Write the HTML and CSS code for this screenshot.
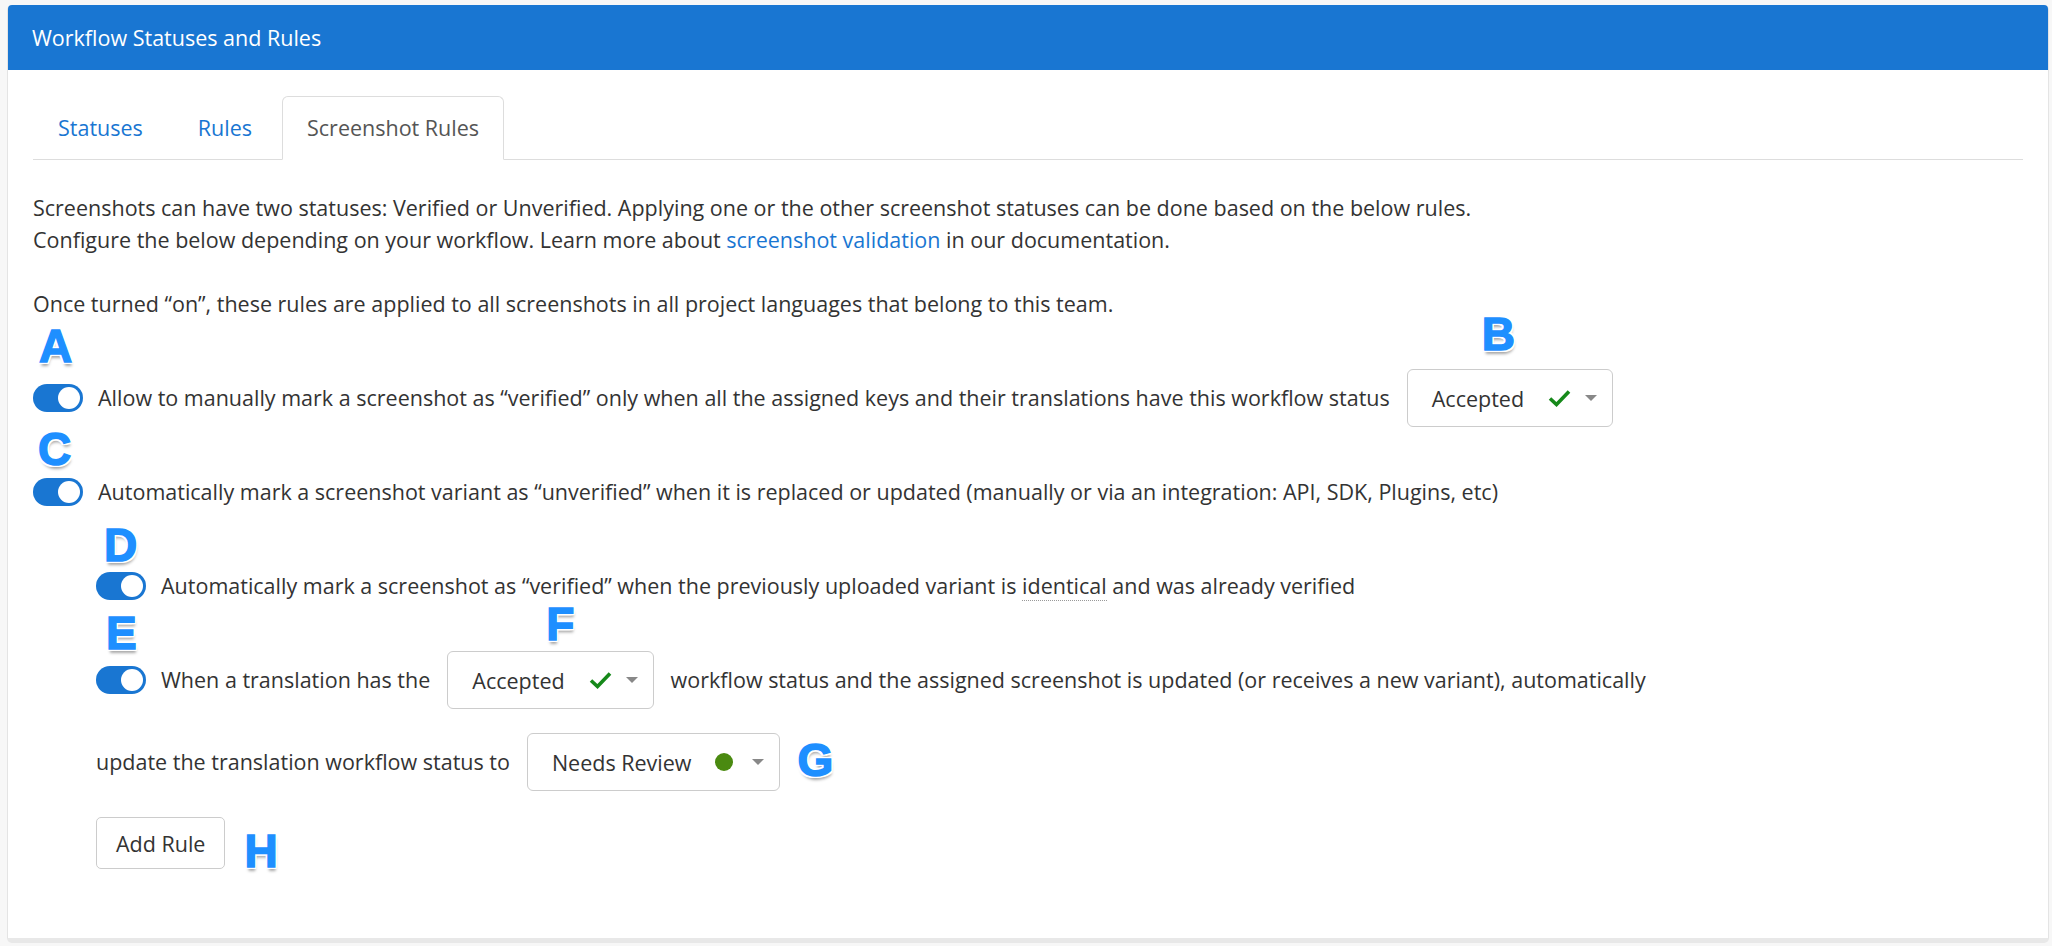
FILE: index.html
```html
<!DOCTYPE html>
<html>
<head>
<meta charset="utf-8">
<title>Workflow Statuses and Rules</title>
<link rel="stylesheet" href="styles.css">
</head>
<body>
<div class="panel">
	<div class="panel-heading">Workflow Statuses and Rules</div>
	<div class="panel-body">
		<ul class="nav-tabs">
			<li><a href="#">Statuses</a></li>
			<li><a href="#">Rules</a></li>
			<li class="active"><a href="#">Screenshot Rules</a></li>
		</ul>

		<p class="intro">Screenshots can have two statuses: Verified or Unverified. Applying one or the other screenshot statuses can be done based on the below rules.<br>
		Configure the below depending on your workflow. Learn more about <a href="#">screenshot validation</a> in our documentation.</p>
		<p class="intro">Once turned “on”, these rules are applied to all screenshots in all project languages that belong to this team.</p>

		<div class="rule first">
			<span class="mark mark-a">A</span>
			<span class="toggle"></span>
			<span class="rule-text">Allow to manually mark a screenshot as “verified” only when all the assigned keys and their translations have this workflow status</span>
			<div class="status-select">
				<span class="mark mark-b">B</span>
				<span class="status-name">Accepted</span>
				<svg class="check" width="23" height="18" viewBox="0 0 23 18"><path d="M2 9.5 L8.5 15.5 L21 2.5" fill="none" stroke="#16891a" stroke-width="3.6"/></svg>
				<span class="caret"></span>
			</div>
		</div>

		<div class="rule">
			<span class="mark mark-c">C</span>
			<span class="toggle"></span>
			<span class="rule-text">Automatically mark a screenshot variant as “unverified” when it is replaced or updated (manually or via an integration: API, SDK, Plugins, etc)</span>
		</div>

		<div class="rule nested">
			<span class="mark mark-d">D</span>
			<span class="toggle"></span>
			<span class="rule-text">Automatically mark a screenshot as “verified” when the previously uploaded variant is <span class="hint">identical</span> and was already verified</span>
		</div>

		<div class="rule nested">
			<span class="mark mark-e">E</span>
			<span class="toggle"></span>
			<span class="rule-text">When a translation has the</span>
			<div class="status-select">
				<span class="mark mark-f">F</span>
				<span class="status-name">Accepted</span>
				<svg class="check" width="23" height="18" viewBox="0 0 23 18"><path d="M2 9.5 L8.5 15.5 L21 2.5" fill="none" stroke="#16891a" stroke-width="3.6"/></svg>
				<span class="caret"></span>
			</div>
			<span class="rule-text">workflow status and the assigned screenshot is updated (or receives a new variant), automatically</span>
		</div>

		<div class="rule nested tight">
			<span class="rule-text">update the translation workflow status to</span>
			<div class="status-select">
				<span class="status-name">Needs Review</span>
				<span class="dot"></span>
				<span class="caret"></span>
			</div>
			<span class="mark mark-g">G</span>
		</div>

		<div class="actions nested">
			<button class="btn">Add Rule</button>
			<span class="mark mark-h">H</span>
		</div>
	</div>
</div>
</body>
</html>
```

FILE: styles.css
```css
* { box-sizing: border-box }

body {
	margin: 0;
	padding: 5px 3px 0 7px;
	background: #f7f7f7;
	font-family: "Open Sans", "Liberation Sans", sans-serif;
	font-size: 21.5px;
	color: #333;
}

a { color: #1976d2; text-decoration: none }

.panel {
	background: #fff;
	border: 1px solid #e4e4e4;
	border-top: 0;
	border-bottom: 5px solid #e8e8e8;
	border-radius: 5px;
}

.panel-heading {
	display: flex;
	align-items: center;
	height: 65px;
	padding: 0 24px;
	background: #1976d2;
	color: #fff;
	font-size: 21.5px;
	border-radius: 4px 4px 0 0;
}

.panel-body { padding: 26px 25px 64px 25px }

/* tabs */
.nav-tabs {
	display: flex;
	margin: 0;
	padding: 0;
	list-style: none;
	border-bottom: 1px solid #ddd;
}

.nav-tabs li { margin: 0 5px -1px 0 }

.nav-tabs a {
	display: block;
	padding: 15px 24px;
	line-height: 32px;
	border: 1px solid transparent;
	border-radius: 6px 6px 0 0;
}

.nav-tabs .active a {
	color: #555;
	background: #fff;
	border-color: #ddd #ddd transparent;
}

.intro {
	margin: 32px 0 0;
	line-height: 32px;
}

/* rules */
.rule {
	position: relative;
	display: flex;
	align-items: center;
	min-height: 58px;
	margin-top: 36px;
	white-space: nowrap;
}

.rule.first { margin-top: 49px }
.rule.tight { margin-top: 24px }
.nested { padding-left: 63px }

.toggle {
	position: relative;
	flex-shrink: 0;
	width: 50px;
	height: 28px;
	margin-right: 15px;
	border-radius: 14px;
	background: #1976d2;
}

.toggle::after {
	content: "";
	position: absolute;
	top: 3px;
	right: 3px;
	width: 22px;
	height: 22px;
	border-radius: 50%;
	background: #fff;
}

.rule-text { line-height: 32px }

.hint { border-bottom: 1px dotted #999 }

.status-select {
	position: relative;
	display: flex;
	align-items: center;
	height: 58px;
	margin: 0 17px;
	padding: 0 15px 0 24px;
	border: 1px solid #ccc;
	border-radius: 6px;
}

.status-name { margin-right: 24px }

.check { margin-right: 14px }

.dot {
	width: 18px;
	height: 18px;
	margin-right: 19px;
	border-radius: 50%;
	background: #4a8a10;
}

.caret {
	width: 0;
	height: 0;
	border-left: 6px solid transparent;
	border-right: 6px solid transparent;
	border-top: 6px solid #888;
}

.actions {
	display: flex;
	align-items: center;
	margin-top: 21px;
}

.btn {
	height: 52px;
	padding: 0 19px;
	background: #fff;
	border: 1px solid #ccc;
	border-radius: 5px;
	font-family: inherit;
	font-size: 21.5px;
	color: #333;
}

/* annotation letters */
.mark {
	font: bold 46px/1 "Liberation Sans", Arial, sans-serif;
	color: #1e8fff;
	-webkit-text-stroke: 1.5px #1e8fff;
	text-shadow:
		-2px 0 #fff, 2px 0 #fff, 0 -2px #fff, 0 2px #fff,
		-2px -2px #fff, 2px 2px #fff, -2px 2px #fff, 2px -2px #fff,
		1px 4px 3px rgba(0, 0, 0, .35);
}

.mark-a, .mark-b, .mark-c, .mark-d, .mark-e, .mark-f { position: absolute }

.mark-a { left: 6px; top: -46px }
.mark-b { left: 74px; top: -59px }
.mark-c { left: 5px; top: -37px }
.mark-d { left: 71px; top: -35px }
.mark-e { left: 73px; top: -41px }
.mark-f { left: 98px; top: -51px }
.mark-g { margin: -4px 0 0 0 }
.mark-h { margin: 16px 0 0 19px }
```
